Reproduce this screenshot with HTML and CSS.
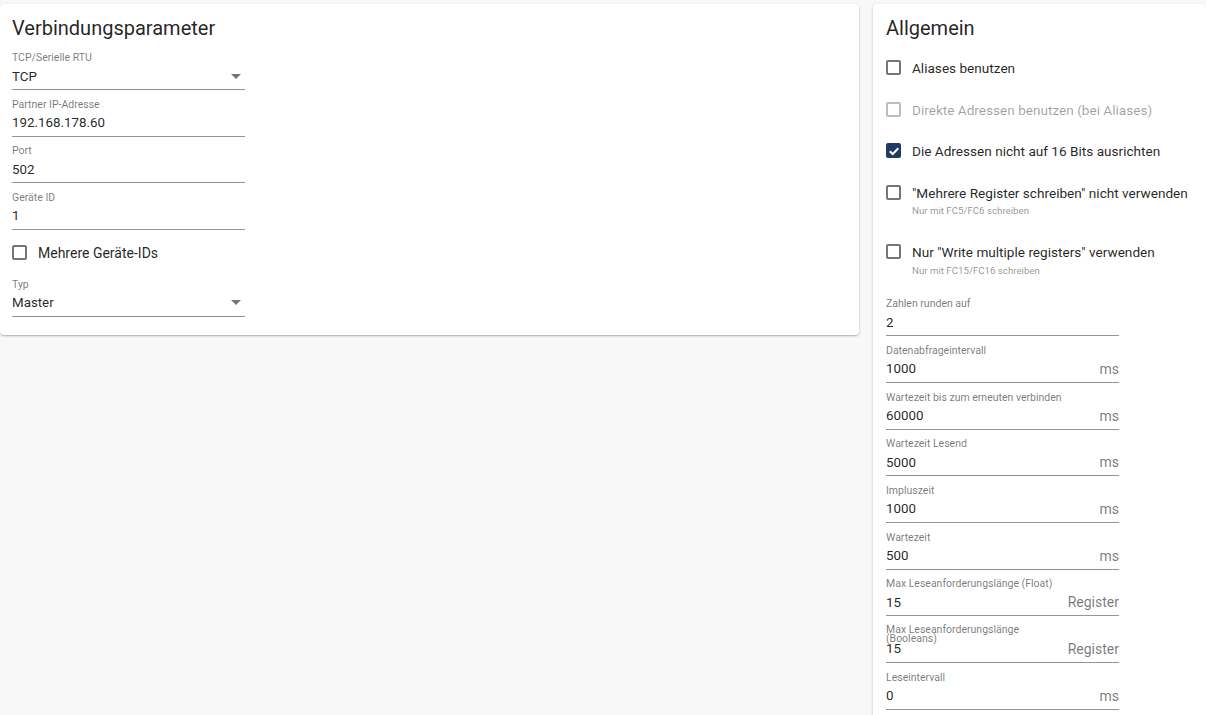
FILE: index.html
```html
<!DOCTYPE html>
<html lang="de">
<head>
    <meta charset="UTF-8">
    <meta name="viewport" content="width=device-width, initial-scale=1.0">
    <title>Modbus Einstellungen</title>
    <link rel="stylesheet" href="styles.css">
</head>
<body>
    <div class="page">
        <div class="card card-left">
            <h2 class="card-title">Verbindungsparameter</h2>

            <div class="field">
                <div class="field-label">TCP/Serielle RTU</div>
                <div class="field-input">
                    <span class="value">TCP</span>
                    <span class="arrow"></span>
                </div>
            </div>
            <div class="field">
                <div class="field-label">Partner IP-Adresse</div>
                <div class="field-input"><span class="value">192.168.178.60</span></div>
            </div>
            <div class="field">
                <div class="field-label">Port</div>
                <div class="field-input"><span class="value">502</span></div>
            </div>
            <div class="field">
                <div class="field-label">Geräte ID</div>
                <div class="field-input"><span class="value">1</span></div>
            </div>

            <div class="check check-left">
                <span class="box"></span>
                <span class="check-text">Mehrere Geräte-IDs</span>
            </div>

            <div class="field">
                <div class="field-label">Typ</div>
                <div class="field-input">
                    <span class="value">Master</span>
                    <span class="arrow"></span>
                </div>
            </div>
        </div>

        <div class="card card-right">
            <h2 class="card-title">Allgemein</h2>

            <div class="check">
                <span class="box"></span>
                <span class="check-text">Aliases benutzen</span>
            </div>
            <div class="check disabled">
                <span class="box"></span>
                <span class="check-text">Direkte Adressen benutzen (bei Aliases)</span>
            </div>
            <div class="check">
                <span class="box checked">
                    <svg viewBox="0 0 14 14" width="14" height="14"><path d="M2.8 7.2 L5.7 10 L11.3 4.3" fill="none" stroke="#fff" stroke-width="2"/></svg>
                </span>
                <span class="check-text">Die Adressen nicht auf 16 Bits ausrichten</span>
            </div>
            <div class="check">
                <span class="box"></span>
                <div>
                    <div class="check-text">"Mehrere Register schreiben" nicht verwenden</div>
                    <div class="helper">Nur mit FC5/FC6 schreiben</div>
                </div>
            </div>
            <div class="check">
                <span class="box"></span>
                <div>
                    <div class="check-text">Nur "Write multiple registers" verwenden</div>
                    <div class="helper">Nur mit FC15/FC16 schreiben</div>
                </div>
            </div>

            <div class="fields">
                <div class="field">
                    <div class="field-label">Zahlen runden auf</div>
                    <div class="field-input"><span class="value">2</span></div>
                </div>
                <div class="field">
                    <div class="field-label">Datenabfrageintervall</div>
                    <div class="field-input"><span class="value">1000</span><span class="unit">ms</span></div>
                </div>
                <div class="field">
                    <div class="field-label">Wartezeit bis zum erneuten verbinden</div>
                    <div class="field-input"><span class="value">60000</span><span class="unit">ms</span></div>
                </div>
                <div class="field">
                    <div class="field-label">Wartezeit Lesend</div>
                    <div class="field-input"><span class="value">5000</span><span class="unit">ms</span></div>
                </div>
                <div class="field">
                    <div class="field-label">Impluszeit</div>
                    <div class="field-input"><span class="value">1000</span><span class="unit">ms</span></div>
                </div>
                <div class="field">
                    <div class="field-label">Wartezeit</div>
                    <div class="field-input"><span class="value">500</span><span class="unit">ms</span></div>
                </div>
                <div class="field">
                    <div class="field-label">Max Leseanforderungslänge (Float)</div>
                    <div class="field-input"><span class="value">15</span><span class="unit">Register</span></div>
                </div>
                <div class="field">
                    <div class="field-label wrap">Max Leseanforderungslänge (Booleans)</div>
                    <div class="field-input"><span class="value">15</span><span class="unit">Register</span></div>
                </div>
                <div class="field">
                    <div class="field-label">Leseintervall</div>
                    <div class="field-input"><span class="value">0</span><span class="unit">ms</span></div>
                </div>
            </div>
        </div>
    </div>
</body>
</html>
```

FILE: styles.css
```css
html, body {
    overflow: hidden;
}

body {
    margin: 0;
    font-family: 'Roboto', 'Liberation Sans', sans-serif;
    background-color: #f8f8f8;
    color: rgba(0, 0, 0, 0.87);
}

.page {
    display: flex;
    align-items: flex-start;
    gap: 14px;
    padding-top: 4px;
}

.card {
    background-color: #ffffff;
    border-radius: 4px;
    box-shadow: 0 1px 3px rgba(0, 0, 0, 0.2), 0 1px 1px rgba(0, 0, 0, 0.12);
    box-sizing: border-box;
}

.card-left {
    width: 859px;
    flex-shrink: 0;
    padding: 12px 12px 11px 12px;
}

.card-right {
    flex: 1;
    min-width: 0;
    padding: 12px 13px 20px 13px;
}

.card-title {
    margin: 0 0 11px 0;
    font-size: 20px;
    font-weight: 400;
    line-height: 24px;
    color: rgba(0, 0, 0, 0.87);
}

.card-right .card-title {
    margin-bottom: 7.5px;
}

/* text fields */
.field {
    width: 233px;
    margin-bottom: 7.67px;
}

.field-label {
    font-size: 10.5px;
    line-height: 12px;
    height: 12px;
    padding-top: 1px;
    color: rgba(0, 0, 0, 0.54);
    white-space: nowrap;
}

.field-label.wrap {
    white-space: normal;
    width: 150px;
    line-height: 9.5px;
}

.field-input {
    display: flex;
    align-items: center;
    margin-top: 2px;
    padding-bottom: 3px;
    border-bottom: 1px solid rgba(0, 0, 0, 0.42);
    height: 20px;
    font-size: 14px;
}

.value {
    flex: 1;
    font-size: 13.33px;
    color: rgba(0, 0, 0, 0.87);
}

.unit {
    color: rgba(0, 0, 0, 0.54);
}

.arrow {
    width: 0;
    height: 0;
    margin-right: 4px;
    border-left: 5px solid transparent;
    border-right: 5px solid transparent;
    border-top: 5px solid rgba(0, 0, 0, 0.54);
}

/* checkboxes */
.check {
    display: flex;
    align-items: flex-start;
    padding: 10.75px 0;
    font-size: 13.6px;
    line-height: 20px;
    white-space: nowrap;
}

.check-left {
    padding: 5px 0;
    margin-top: 3px;
    margin-bottom: 10px;
    font-size: 14px;
}

.box {
    width: 15px;
    height: 15px;
    margin: 2px 11px 0 0;
    border: 2px solid rgba(0, 0, 0, 0.54);
    border-radius: 2px;
    box-sizing: border-box;
    flex-shrink: 0;
    display: flex;
    align-items: center;
    justify-content: center;
}

.box svg {
    flex-shrink: 0;
}

.box.checked {
    background-color: #1e3a66;
    border-color: #1e3a66;
}

.check-text {
    color: rgba(0, 0, 0, 0.87);
}

.check.disabled .box {
    border-color: rgba(0, 0, 0, 0.26);
}

.check.disabled .check-text {
    color: rgba(0, 0, 0, 0.38);
}

.helper {
    font-size: 9.7px;
    line-height: 12px;
    margin-top: 2.5px;
    margin-bottom: 3.5px;
    color: rgba(0, 0, 0, 0.45);
}

.fields {
    margin-top: 6.25px;
}
```
